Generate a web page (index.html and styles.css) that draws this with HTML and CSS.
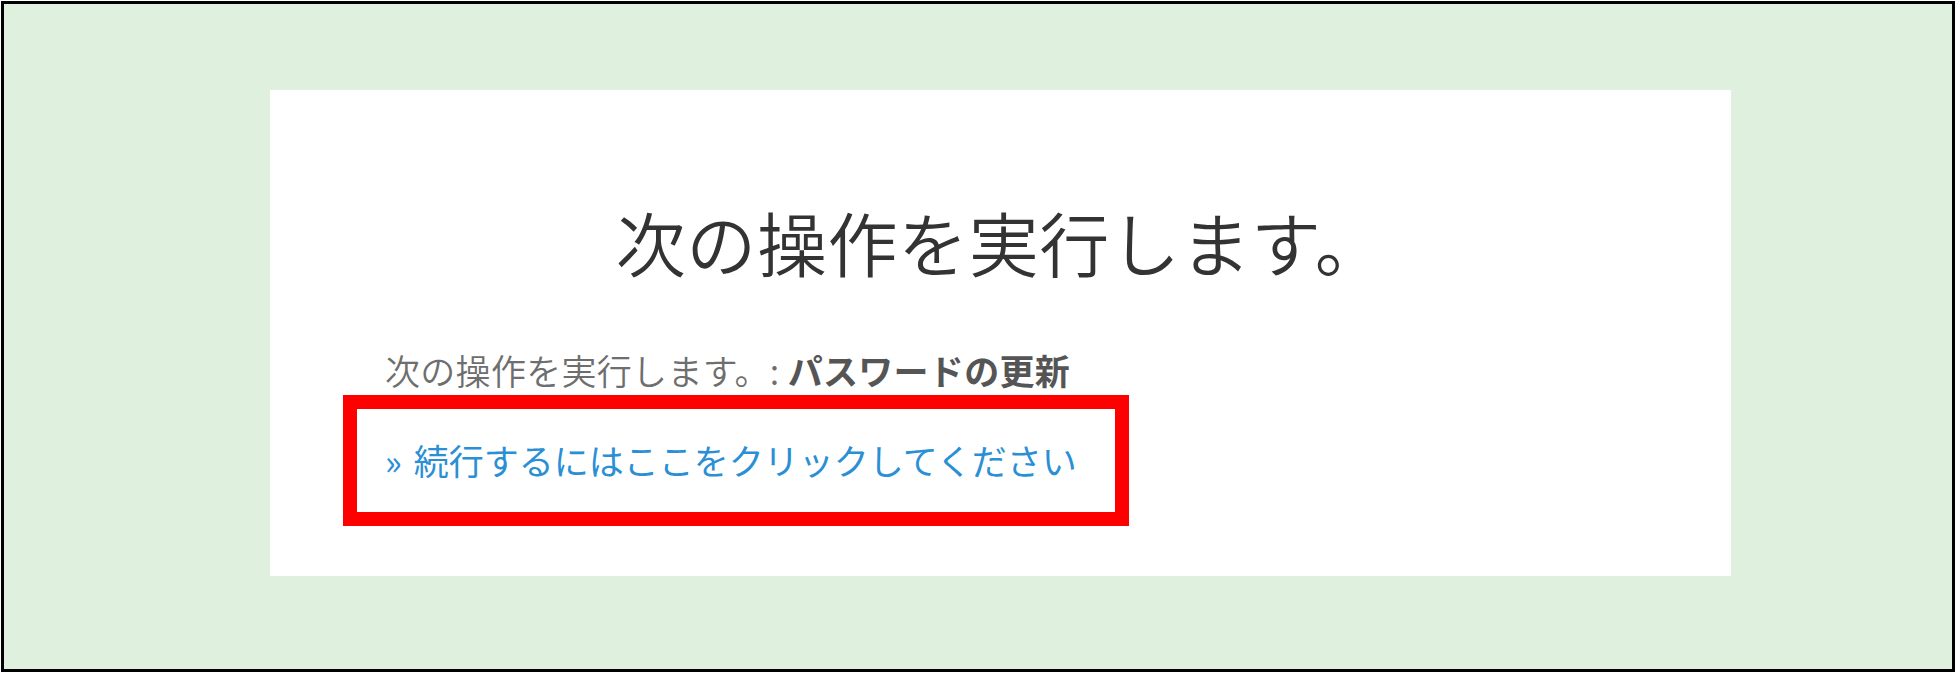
FILE: index.html
```html
<!DOCTYPE html>
<html lang="ja">
<head>
<meta charset="utf-8">
<title>次の操作を実行します。</title>
<link rel="stylesheet" href="styles.css">
</head>
<body>
<div class="frame">
  <div class="card">
    <h1 class="title">次の操作を実行します。</h1>
    <p class="action">次の操作を実行します。: <strong class="action-name">パスワードの更新</strong></p>
    <div class="highlight">
      <a class="continue-link" href="#"><span class="raquo">»</span>続行するにはここをクリックしてください</a>
    </div>
  </div>
</div>
</body>
</html>
```

FILE: styles.css
```css
html, body {
  margin: 0;
  padding: 0;
  background: #ffffff;
}

body {
  font-family: "Noto Sans CJK JP", "Noto Sans", sans-serif;
}

.frame {
  box-sizing: border-box;
  margin: 1px 0 0 1px;
  width: 1954px;
  height: 671px;
  border: 3px solid #000000;
  background: #dff0de;
  padding: 86px 0 0 266px;
}

.card {
  box-sizing: border-box;
  width: 1461px;
  height: 486px;
  background: #ffffff;
  padding: 110px 0 0 0;
}

.title {
  margin: 0;
  font-size: 70px;
  line-height: 84px;
  font-weight: 350;
  letter-spacing: 0.6px;
  color: #333333;
  text-align: center;
}

.action {
  margin: 61px 0 0 115px;
  font-size: 35px;
  line-height: 50px;
  font-weight: 350;
  letter-spacing: 0.3px;
  color: #6e6e6e;
}

.action-name {
  font-weight: 700;
  color: #555555;
}

.highlight {
  box-sizing: border-box;
  width: 786px;
  margin-left: 73px;
  border: 14px solid #ff0000;
  padding: 26px 0 27px 28px;
}

.continue-link {
  display: block;
  font-size: 35px;
  line-height: 50px;
  color: #2a8fd4;
  text-decoration: none;
}

.raquo {
  margin-right: 12px;
}
```
